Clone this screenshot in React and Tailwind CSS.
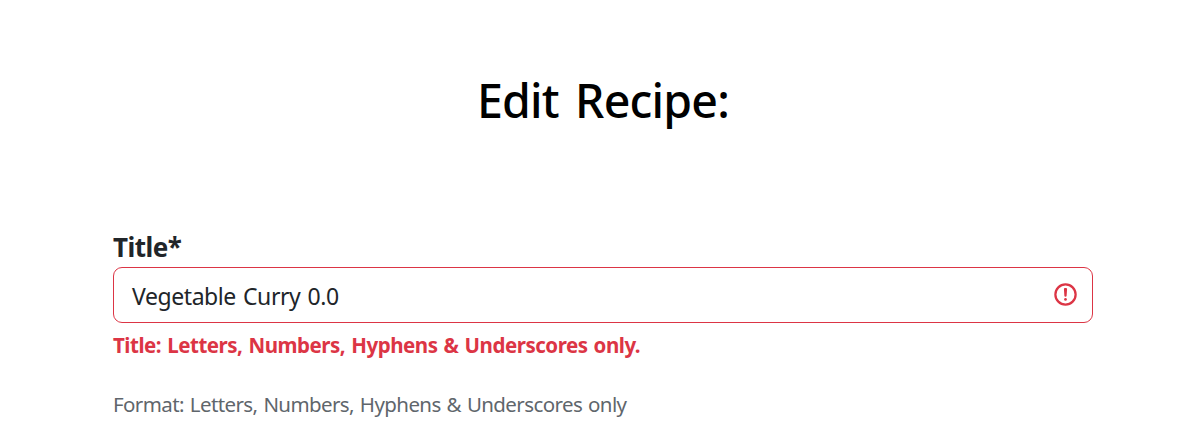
function InvalidIcon() {
  return (
    <svg className="size-[27px] shrink-0" viewBox="0 0 12 12" fill="none" stroke="#dc3545">
      <circle cx="6" cy="6" r="4.5" />
      <path strokeLinejoin="round" d="M5.8 3.6h.4L6 6.5z" />
      <circle cx="6" cy="8.2" r=".6" fill="#dc3545" stroke="none" />
    </svg>
  );
}

export default function App() {
  return (
    <main className="h-[433px] w-full overflow-hidden bg-white pl-[113px] pr-[99px] pt-[66px] font-['Noto_Sans',sans-serif] text-[#212529]">
      <h1 className="whitespace-nowrap text-center text-[46.5px] leading-[68px] font-medium tracking-[-0.8px] [word-spacing:5px] text-black">
        Edit Recipe:
      </h1>
      <form className="mt-[94px] flex flex-col items-start">
        <label className="h-[39px] whitespace-nowrap text-[26px] leading-[38px] font-bold tracking-[-0.5px]">
          <span>Title*</span>
        </label>
        <div className="flex h-14 w-full items-center justify-between rounded-[9px] border border-[#dc3545] pb-px pl-[18px] pr-[13px]">
          <span className="whitespace-nowrap pt-0.5 text-[23px] leading-9 tracking-[-0.42px] [word-spacing:1.5px]">Vegetable Curry 0.0</span>
          <InvalidIcon />
        </div>
        <p className="mt-[6px] whitespace-nowrap text-[20.5px] leading-[32px] font-bold tracking-[-0.47px] [word-spacing:1.2px] text-[#dc3545]">
          <span>Title: Letters, Numbers, Hyphens &amp; Underscores only.</span>
        </p>
        <p className="mt-[27px] whitespace-nowrap text-[20.5px] leading-[32px] tracking-[-0.6px] [word-spacing:1.2px] text-[#5f666c]">
          <span>Format: Letters, Numbers, Hyphens &amp; Underscores only</span>
        </p>
      </form>
    </main>
  );
}
